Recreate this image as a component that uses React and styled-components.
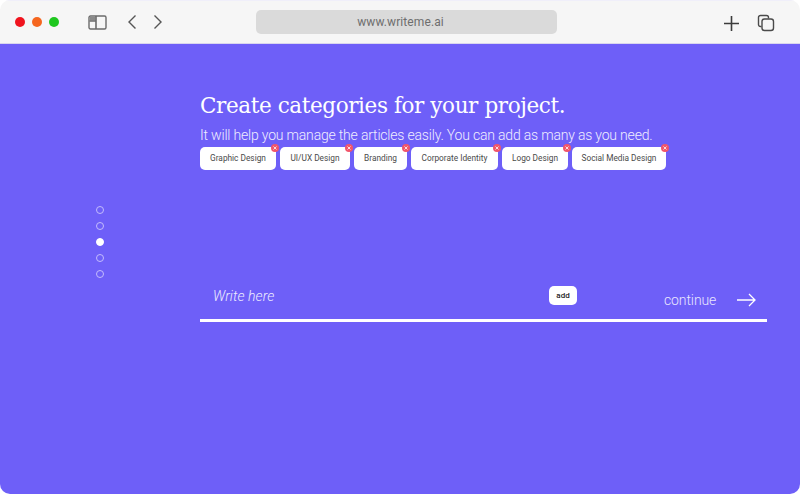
import styled, { createGlobalStyle } from 'styled-components';

const CATEGORIES = [
  { name: 'Graphic Design', width: 76 },
  { name: 'UI/UX Design', width: 70 },
  { name: 'Branding', width: 53 },
  { name: 'Corporate Identity', width: 87 },
  { name: 'Logo Design', width: 66 },
  { name: 'Social Media Design', width: 94 },
];

export default function App() {
  return (
    <Window>
      <GlobalStyle />
      <Toolbar>
        <Lights>
          <Light $color="#f0141e" />
          <Light $color="#f5661f" />
          <Light $color="#1fc71f" />
        </Lights>
        <NavIcons>
          <svg width="20" height="15" viewBox="0 0 20 15" fill="none" stroke="#6b6b6b" strokeWidth="1.4">
            <rect x="1" y="1" width="17" height="13" rx="1.5" />
            <path d="M2 2h5.5v3.5H2z" fill="#8a8a8a" stroke="none" />
            <path d="M8 1v13" strokeWidth="1.6" />
            <path d="M1.5 6h6.5" />
          </svg>
          <BackIcon width="10" height="16" viewBox="0 0 10 16" fill="none" stroke="#555" strokeWidth="1.4">
            <path d="M8.5 1.5 2 8l6.5 6.5" />
          </BackIcon>
          <ForwardIcon width="10" height="16" viewBox="0 0 10 16" fill="none" stroke="#555" strokeWidth="1.4">
            <path d="M1.5 1.5 8 8l-6.5 6.5" />
          </ForwardIcon>
        </NavIcons>
        <AddressBar>www.writeme.ai</AddressBar>
        <ToolActions>
          <svg width="17" height="17" viewBox="0 0 17 17" fill="none" stroke="#3c3c3c" strokeWidth="1.6">
            <path d="M8.5 1v15M1 8.5h15" />
          </svg>
          <svg width="18" height="18" viewBox="0 0 18 18" fill="none" stroke="#4a4a4a" strokeWidth="1.4">
            <path d="M4.5 12.5H3.5a2 2 0 0 1-2-2v-7a2 2 0 0 1 2-2h6a2 2 0 0 1 2 2v1" />
            <rect x="5" y="5" width="11.5" height="11.5" rx="2.5" />
          </svg>
        </ToolActions>
      </Toolbar>
      <Main>
        <Steps>
          {[0, 1, 2, 3, 4].map((i) => (
            <Step key={i} $active={i === 2} />
          ))}
        </Steps>
        <Content>
          <Title>Create categories for your project.</Title>
          <Subtitle>It will help you manage the articles easily. You can add as many as you need.</Subtitle>
          <TagList>
            {CATEGORIES.map((c) => (
              <Tag key={c.name} $width={c.width}>
                {c.name}
                <Remove>
                  <svg width="4" height="4" viewBox="0 0 4 4" stroke="#fff" strokeWidth="0.8">
                    <path d="M.5.5l3 3M3.5.5l-3 3" />
                  </svg>
                </Remove>
              </Tag>
            ))}
          </TagList>
          <InputRow>
            <Placeholder>Write here</Placeholder>
            <AddButton>add</AddButton>
            <Continue>
              continue
              <svg width="19" height="14" viewBox="0 0 19 14" fill="none" stroke="#fff" strokeWidth="1.3">
                <path d="M0 7h18M12 1l6 6-6 6" />
              </svg>
            </Continue>
          </InputRow>
        </Content>
      </Main>
    </Window>
  );
}

const GlobalStyle = createGlobalStyle`
  html, body {
    margin: 0;
    background: #fff;
  }
  * {
    box-sizing: border-box;
  }
`;

const Window = styled.div`
  width: 800px;
  height: 494px;
  display: flex;
  flex-direction: column;
  overflow: hidden;
  border-radius: 10px;
  font-family: Roboto, sans-serif;
`;

const Toolbar = styled.header`
  height: 44px;
  flex-shrink: 0;
  display: flex;
  align-items: center;
  background: #f6f6f6;
  border-top: 1px solid #f0effa;
  border-bottom: 1px solid #d9d6ee;
  padding-left: 15px;
`;

const Lights = styled.div`
  display: flex;
  gap: 7px;
  width: 73px;
`;

const Light = styled.span`
  width: 10px;
  height: 10px;
  border-radius: 50%;
  background: ${(p) => p.$color};
  filter: blur(0.4px);
`;

const NavIcons = styled.div`
  display: flex;
  align-items: center;
  width: 168px;
`;

const BackIcon = styled.svg`
  margin-left: 19px;
`;

const ForwardIcon = styled.svg`
  margin-left: 16px;
`;

const AddressBar = styled.div`
  width: 301px;
  height: 24px;
  display: flex;
  align-items: center;
  justify-content: center;
  padding-right: 12px;
  background: #dadada;
  border-radius: 5px;
  font-size: 12px;
  letter-spacing: 0.1px;
  color: #6e6e6e;
`;

const ToolActions = styled.div`
  display: flex;
  align-items: center;
  gap: 17px;
  margin: 2px 0 0 166px;
`;

const Main = styled.main`
  flex: 1;
  display: flex;
  background: #6e5ff8;
`;

const Steps = styled.div`
  width: 200px;
  padding: 162px 0 0 96px;
  display: flex;
  flex-direction: column;
  gap: 8px;
`;

const Step = styled.span`
  width: 8px;
  height: 8px;
  border-radius: 50%;
  border: 1px solid ${(p) => (p.$active ? '#fff' : '#c3bcfc')};
  background: ${(p) => (p.$active ? '#fff' : 'transparent')};
`;

const Content = styled.div`
  width: 567px;
  display: flex;
  flex-direction: column;
  padding-top: 46px;
`;

const Title = styled.h1`
  margin: 0;
  font-family: 'DejaVu Serif', serif;
  font-weight: 400;
  font-size: 21.5px;
  line-height: 32px;
  letter-spacing: -0.4px;
  color: #fff;
`;

const Subtitle = styled.p`
  margin: 4px 0 0;
  font-weight: 300;
  font-size: 14px;
  line-height: 18px;
  letter-spacing: -0.19px;
  color: #f0eeff;
`;

const TagList = styled.div`
  display: flex;
  gap: 4px;
  margin-top: 3px;
`;

const Tag = styled.div`
  position: relative;
  width: ${(p) => p.$width}px;
  height: 23px;
  padding-bottom: 1px;
  display: flex;
  align-items: center;
  justify-content: center;
  background: #fff;
  border-radius: 5px;
  font-size: 8.3px;
  color: #4a4a4a;
  white-space: nowrap;
`;

const Remove = styled.span`
  position: absolute;
  top: -3px;
  right: -3px;
  width: 8px;
  height: 8px;
  display: flex;
  align-items: center;
  justify-content: center;
  border-radius: 50%;
  background: #f2566b;
`;

const InputRow = styled.div`
  position: relative;
  height: 49px;
  margin-top: 103px;
  display: flex;
  align-items: flex-start;
  border-bottom: 3px solid #fff;
  padding-left: 13px;
`;

const Placeholder = styled.span`
  width: 336px;
  padding-top: 14px;
  font-style: italic;
  font-weight: 300;
  font-size: 14px;
  line-height: 18px;
  letter-spacing: 0.1px;
  color: #efedff;
`;

const AddButton = styled.button`
  width: 28px;
  height: 19px;
  margin-top: 13px;
  padding: 0;
  border: 0;
  border-radius: 5px;
  background: #fff;
  font-family: Roboto, sans-serif;
  font-size: 8px;
  font-weight: 500;
  color: #222;
`;

const Continue = styled.div`
  display: flex;
  align-items: center;
  gap: 21px;
  margin-left: 87px;
  padding-top: 18px;
  font-weight: 300;
  font-size: 14px;
  line-height: 18px;
  letter-spacing: -0.1px;
  color: #e9e6fe;
`;
